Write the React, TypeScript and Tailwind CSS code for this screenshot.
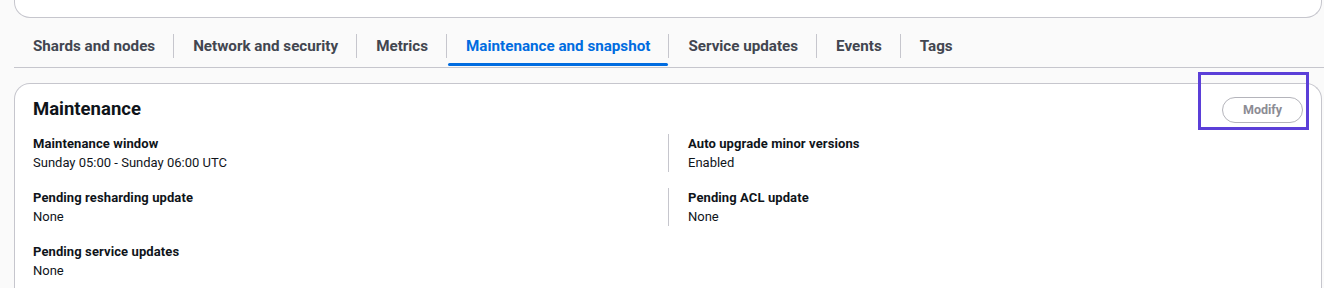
import React from "react";

const tabs = [
  "Shards and nodes",
  "Network and security",
  "Metrics",
  "Maintenance and snapshot",
  "Service updates",
  "Events",
  "Tags",
];

function Field({ label, value }: { label: string; value: string }) {
  return (
    <div className="flex flex-col">
      <div className="text-[13px] leading-[19px] font-bold text-[#0f141a] tracking-[0.1px]">{label}</div>
      <div className="text-[13px] leading-[19px] text-[#0f141a]">{value}</div>
    </div>
  );
}

export default function App() {
  return (
    <div
      className="w-[1324px] h-[288px] overflow-hidden bg-[#fafafa]"
      style={{ fontFamily: "Roboto, 'Open Sans', sans-serif" }}
    >
      <div className="ml-[14px] mr-[2px] h-[18px] bg-white border border-t-0 border-[#c6c6cd] rounded-b-[16px]" />

      <div className="ml-[14px] h-[50px] border-b border-[#c6c6cd] flex items-stretch">
        {tabs.map((t, i) => (
          <React.Fragment key={t}>
            {i > 0 && (
              <div className="self-center mt-[6px] w-px h-[24px] bg-[#c6c6cd]" />
            )}
            <div className="relative flex items-center pl-[19px] pr-[18px] pt-[8px]">
              <span
                className={
                  "text-[15.2px] font-bold " +
                  (t === "Maintenance and snapshot" ? "text-[#006ce0]" : "text-[#424650]")
                }
              >
                {t}
              </span>
              {t === "Maintenance and snapshot" && (
                <div className="absolute left-[1px] right-0 bottom-[1px] h-[3px] rounded-full bg-[#006ce0]" />
              )}
            </div>
          </React.Fragment>
        ))}
      </div>

      <div className="relative mt-[15px] ml-[14px] mr-[2px] h-[220px] bg-white border border-b-0 border-[#c6c6cd] rounded-t-[16px] px-[18px]">
        <div className="flex items-center justify-between h-[48px]">
          <h2 className="mt-[4px] text-[18.5px] font-bold text-[#0f141a]">Maintenance</h2>
          <button className="mt-[4px] h-[26px] w-[81px] rounded-full border border-[#b4b4bb] text-[12.5px] font-bold text-[#8c8c94] bg-white">
            Modify
          </button>
        </div>
        <div className="grid grid-cols-2 mt-[2px]">
          <div className="flex flex-col gap-[16px]">
            <Field label="Maintenance window" value="Sunday 05:00 - Sunday 06:00 UTC" />
            <Field label="Pending resharding update" value="None" />
            <Field label="Pending service updates" value="None" />
          </div>
          <div className="flex flex-col gap-[16px]">
            <div className="border-l border-[#c6c6cd] pl-[19px]">
              <Field label="Auto upgrade minor versions" value="Enabled" />
            </div>
            <div className="border-l border-[#c6c6cd] pl-[19px]">
              <Field label="Pending ACL update" value="None" />
            </div>
          </div>
        </div>
        <div className="absolute left-[1183px] top-[-12px] w-[111px] h-[58px] border-[3px] border-[#5b3fd8]" />
      </div>
    </div>
  );
}
